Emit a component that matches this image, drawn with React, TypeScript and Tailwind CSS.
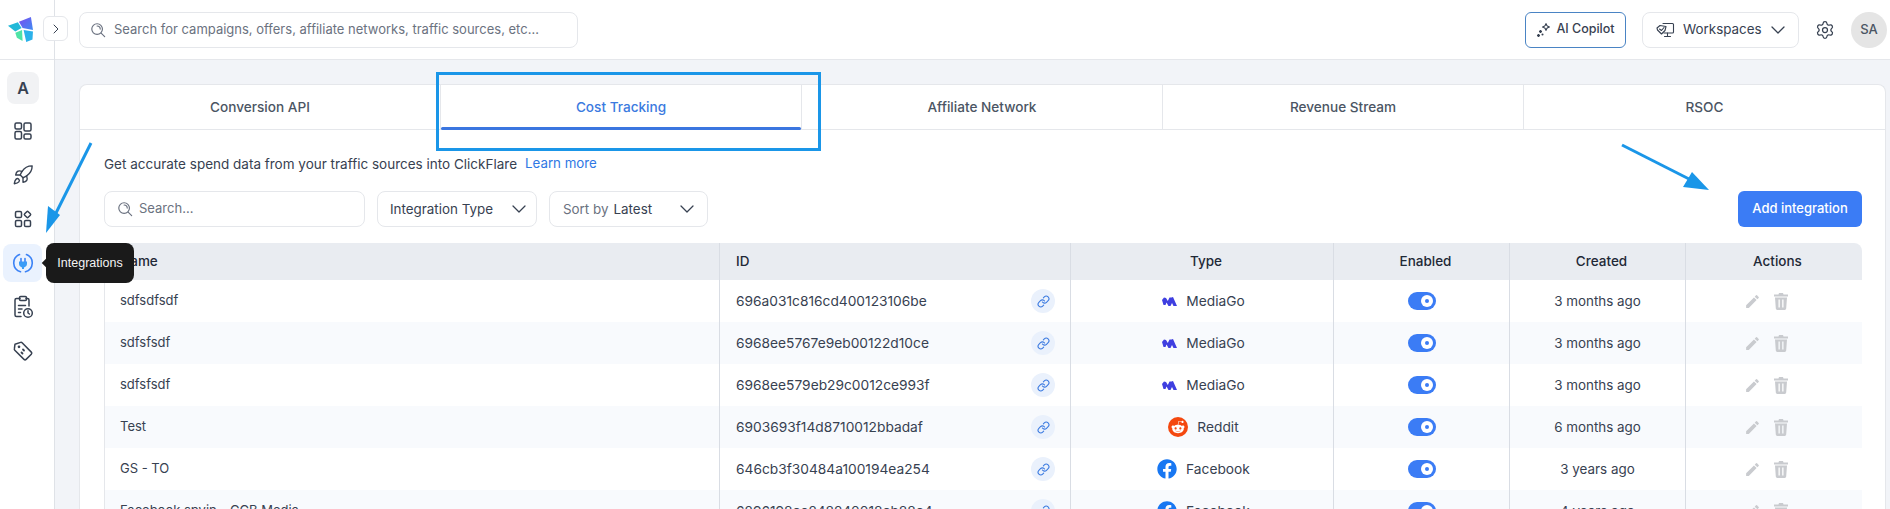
import React from "react";
import { ChevronRight, ChevronDown, Link as LinkIcon, Settings, Rocket } from "lucide-react";
import { FaFacebook, FaRedditAlien } from "react-icons/fa";

const Mag = ({ size = 17 }: { size?: number }) => (
  <svg width={size} height={size} viewBox="0 0 18 18" fill="none" stroke="#6b7280" strokeWidth="1.3" strokeLinecap="round">
    <circle cx="8" cy="8" r="6" />
    <path d="M12.5 12.5 16.5 16.5" />
    <path d="M8 4.5a3.5 3.5 0 0 1 3.5 3.5" />
  </svg>
);

const Logo = () => (
  <svg width="25" height="25" viewBox="0 0 24 24">
    <defs>
      <linearGradient id="lg1" x1="0" y1="0" x2="1" y2="1">
        <stop offset="0" stopColor="#7c4df0" />
        <stop offset="1" stopColor="#3d8bf2" />
      </linearGradient>
    </defs>
    <polygon points="0,8.500 9.500,5 13,10.500 7,14" fill="#22b8d8" />
    <polygon points="10.500,4.500 22,0 24,12.500 14,10.500" fill="url(#lg1)" />
    <polygon points="15,12.500 24,14 23.500,21.500 17.500,24" fill="#2bb1ea" />
    <polygon points="7,15 13.500,12.500 14,23 8.500,20" fill="#4fe3a6" />
  </svg>
);

const Dash = () => (
  <svg width="20" height="20" viewBox="0 0 20 20" fill="none" stroke="#374151" strokeWidth="1.5">
    <rect x="2" y="2" width="6.5" height="6" rx="1.5" />
    <rect x="2" y="10.500" width="6.5" height="7.500" rx="1.5" />
    <rect x="11" y="2" width="7" height="8" rx="1.5" />
    <rect x="11" y="13" width="7" height="5" rx="1.5" />
  </svg>
);

const Apps = () => (
  <svg width="20" height="20" viewBox="0 0 20 20" fill="none" stroke="#374151" strokeWidth="1.5">
    <rect x="2.500" y="2.500" width="6" height="6" rx="1.3" />
    <rect x="2.500" y="11.500" width="6" height="6" rx="1.3" />
    <rect x="11.500" y="11.500" width="6" height="6" rx="1.3" />
    <rect x="12" y="3" width="5" height="5" rx="1" transform="rotate(45 14.500 5.500)" />
  </svg>
);

const Plug = () => (
  <svg width="24" height="24" viewBox="0 0 24 24" fill="none">
    <path d="M15.500 3.600A9 9 0 0 1 14.500 20.700" stroke="#3b82f6" strokeWidth="1.6" strokeLinecap="round" />
    <path d="M8.500 3.600A9 9 0 0 0 9.500 20.700" stroke="#3b82f6" strokeWidth="1.6" strokeLinecap="round" />
    <path d="M8 10.500h8v2a4 4 0 0 1-3 3.900V18h-2v-1.600a4 4 0 0 1-3-3.900z" fill="#3b9cf6" />
    <path d="M10 7.500v3M14 7.500v3" stroke="#3b82f6" strokeWidth="1.6" strokeLinecap="round" />
  </svg>
);

const ClipClock = () => (
  <svg width="22" height="24" viewBox="0 0 22 24" fill="none" stroke="#374151" strokeWidth="1.5" strokeLinecap="round" strokeLinejoin="round">
    <path d="M8 3.500H4.500A1.500 1.500 0 0 0 3 5v15a1.500 1.500 0 0 0 1.500 1.500H9" />
    <path d="M14 3.500h1.500A1.500 1.500 0 0 1 17 5v6" />
    <rect x="7.500" y="1.500" width="7" height="4" rx="1.2" />
    <path d="M6.500 10.500h7M6.500 14h3.500M6.500 17.500h2" />
    <circle cx="16" cy="18" r="4.300" />
    <path d="M16 15.800V18l1.400 1" />
  </svg>
);

const TagIcon = () => (
  <svg width="22" height="22" viewBox="0 0 22 22" fill="none" stroke="#374151" strokeWidth="1.5" strokeLinecap="round" strokeLinejoin="round">
    <path d="M3 4.200 8.600 2.400a1.500 1.500 0 0 1 1.500.4l9.200 9.300a1.500 1.500 0 0 1 0 2.100l-5.200 5.200a1.500 1.500 0 0 1-2.100 0L2.800 10.200a1.500 1.500 0 0 1-.4-1.500z" />
    <circle cx="7" cy="6.800" r="0.6" fill="#374151" />
    <path d="M11 9.500 12 10.500M9.500 12.500 10.500 13.500" strokeWidth="1.8" />
  </svg>
);

const Sparkle = () => (
  <svg width="16" height="16" viewBox="0 0 16 16" fill="none" stroke="#374151" strokeWidth="1.1" strokeLinejoin="round">
    <path d="M10 1.500c.3 2 1.200 3 3.500 3.500-2.300.5-3.200 1.500-3.500 3.500-.3-2-1.200-3-3.500-3.500 2.300-.5 3.200-1.500 3.500-3.500z" />
    <path d="M4.500 8.500l1 1-1 1-1-1z" fill="#374151" />
    <path d="M2.500 12.500l1 1-1 1-1-1z" fill="#374151" />
    <circle cx="6.500" cy="12.500" r="0.500" fill="#374151" />
  </svg>
);

const WorkspacesIcon = () => (
  <svg width="19" height="16" viewBox="0 0 19 16" fill="none" stroke="#374151" strokeWidth="1.1" strokeLinejoin="round" strokeLinecap="round">
    <path d="M7 1.500h9.500a1 1 0 0 1 1 1v7.500a1 1 0 0 1-1 1H8" />
    <path d="M11.500 11v3M8.500 14.500h6" />
    <path d="M1 6l3-2.500 6 1-1 4-3.500 3.500L1.500 8z" fill="#fff" />
    <path d="M3.500 7l2 1.500 2.500-3" />
  </svg>
);

const MediaGo = () => (
  <svg width="15" height="9" viewBox="0 0 15 9">
    <path d="M0 3 2 .5 4 1l1.800 3L7.500.5 9.500.5 11 0l4 9h-3.500L10 6 8.500 9H6.500L4.500 5.500 3.500 8H1.500z" fill="#3f3fe0" />
  </svg>
);

const Pencil = () => (
  <svg width="17" height="17" viewBox="0 0 24 24" fill="#c9cbcf">
    <path d="M3 17.250V21h3.750L17.810 9.940l-3.750-3.750L3 17.250zM20.710 7.040a1 1 0 0 0 0-1.410l-2.340-2.340a1 1 0 0 0-1.410 0l-1.830 1.830 3.750 3.750 1.830-1.830z" />
  </svg>
);

const Trash = () => (
  <svg width="16" height="17" viewBox="0 0 16 17" fill="#c9cbcf">
    <path d="M6 0h4l.5 1.500H15V3.500H1V1.500h4.500z" />
    <path fillRule="evenodd" d="M2 4.500h12l-.8 11a1.500 1.500 0 0 1-1.500 1.400H4.300a1.500 1.500 0 0 1-1.500-1.400zM5.500 6.500v8h1.300v-8zM9.200 6.500v8h1.300v-8z" />
  </svg>
);

const Reddit = () => (
  <span className="flex h-[20px] w-[20px] items-center justify-center rounded-full bg-[#f4480f] text-white">
    <FaRedditAlien size={14} />
  </span>
);

const FB = () => <FaFacebook size={20} color="#1877f2" />;

type RowData = { name: string; id: string; type: "MediaGo" | "Reddit" | "Facebook"; created: string };

const rows: RowData[] = [
  { name: "sdfsdfsdf", id: "696a031c816cd400123106be", type: "MediaGo", created: "3 months ago" },
  { name: "sdfsfsdf", id: "6968ee5767e9eb00122d10ce", type: "MediaGo", created: "3 months ago" },
  { name: "sdfsfsdf", id: "6968ee579eb29c0012ce993f", type: "MediaGo", created: "3 months ago" },
  { name: "Test", id: "6903693f14d8710012bbadaf", type: "Reddit", created: "6 months ago" },
  { name: "GS - TO", id: "646cb3f30484a100194ea254", type: "Facebook", created: "3 years ago" },
  { name: "Facebook spyin - CCB Media", id: "6296198ce248240018cb88c4", type: "Facebook", created: "4 years ago" },
];

const tabs = ["Conversion API", "Cost Tracking", "Affiliate Network", "Revenue Stream", "RSOC"];

const Cell = ({ children, className = "" }: { children: React.ReactNode; className?: string }) => (
  <div className={`flex items-center border-r border-[#d9dde4] last:border-r-0 ${className}`}>{children}</div>
);

const GRID = "grid grid-cols-[615px_351px_263px_176px_176px_175px]";

function Item({ children, active }: { children: React.ReactNode; active?: boolean }) {
  return (
    <div className={`flex h-[38px] w-[39px] items-center justify-center rounded-lg ${active ? "bg-[#eaf2fe]" : ""}`}>
      {children}
    </div>
  );
}

export default function App() {
  return (
    <div className="relative flex h-[509px] w-full overflow-hidden bg-white font-['Inter',sans-serif] text-[13.4px] text-[#374151]">
      <aside className="flex w-[55px] shrink-0 flex-col border-r border-[#dfe2e7] bg-white">
        <div className="flex h-[60px] shrink-0 items-center border-b border-[#e5e7eb] pl-[8px]">
          <Logo />
        </div>
        <div className="flex flex-col items-start gap-[6px] pl-[3px] pt-[12px]">
          <div className="mb-[2px] ml-[4px] flex h-[32px] w-[32px] items-center justify-center rounded-lg bg-[#f1f2f4] text-[16px] font-semibold text-[#374151]">
            A
          </div>
          <Item><Dash /></Item>
          <Item><Rocket size={22} strokeWidth={1.5} color="#374151" /></Item>
          <Item><Apps /></Item>
          <Item active><Plug /></Item>
          <Item><ClipClock /></Item>
          <Item><TagIcon /></Item>
        </div>
      </aside>

      <div className="flex min-w-0 flex-1 flex-col">
        <header className="flex h-[60px] shrink-0 items-center border-b border-[#e5e7eb] bg-white pl-[24px] pr-[3px]">
          <div className="flex h-[36px] w-[499px] items-center gap-[8px] rounded-lg border border-[#e5e7eb] pl-[10px]">
            <Mag size={16} />
            <span className="text-[13px] text-[#6b7280]">Search for campaigns, offers, affiliate networks, traffic sources, etc…</span>
          </div>
          <div className="ml-auto flex items-center">
            <div className="flex h-[36px] w-[101px] items-center justify-center gap-[4px] rounded-md border border-[#4a84c4] text-[12.5px] font-medium text-[#374151]">
              <Sparkle />
              AI Copilot
            </div>
            <div className="ml-[16px] flex h-[36px] w-[157px] items-center gap-[8px] rounded-lg border border-[#e5e7eb] pl-[13px] text-[13.4px] text-[#374151]">
              <WorkspacesIcon />
              <span>Workspaces</span>
              <ChevronDown size={24} strokeWidth={1.25} className="ml-[-4px]" />
            </div>
            <Settings size={20} strokeWidth={1.5} color="#374151" className="ml-[16px]" />
            <div className="ml-[16px] flex h-[36px] w-[36px] items-center justify-center rounded-full bg-[#e5e5e5] text-[13px] font-medium text-[#4b5563]">
              SA
            </div>
          </div>
        </header>

        <main className="min-h-0 flex-1 overflow-hidden bg-[#f2f4f8] pl-[24px] pr-[4px] pt-[24px]">
          <div className="h-full rounded-t-lg border border-b-0 border-[#e5e7eb] bg-white">
            <div className="grid h-[45px] grid-cols-5 border-b border-[#e5e7eb]">
              {tabs.map((t, i) => (
                <div
                  key={t}
                  className={`relative flex items-center justify-center text-[13.6px] font-medium ${i < 4 ? "border-r border-[#e5e7eb]" : ""} ${i === 1 ? "text-[#3b7ae0]" : "text-[#4b5563]"}`}
                >
                  {t}
                  {i === 1 && <span className="absolute bottom-[-1px] left-0 right-0 h-[3px] rounded-sm bg-[#3b76e0]" />}
                </div>
              ))}
            </div>
            <div className="pl-[24px] pr-[23px] pt-[24px]">
              <p className="flex h-[20px] items-center text-[13.5px] text-[#374151]">
                Get accurate spend data from your traffic sources into ClickFlare
                <span className="ml-[8px] text-[13.3px] text-[#2f78e4]">Learn more</span>
              </p>
              <div className="mt-[17px] flex h-[36px] items-stretch">
                <div className="flex w-[261px] items-center gap-[6px] rounded-lg border border-[#e5e7eb] pl-[12px] text-[#6b7280]">
                  <Mag size={16} />
                  <span className="text-[13px]">Search…</span>
                </div>
                <div className="ml-[12px] flex w-[160px] items-center rounded-lg border border-[#e5e7eb] pl-[12px] text-[#374151]">
                  Integration Type
                  <ChevronDown size={24} strokeWidth={1.25} className="ml-[14px]" />
                </div>
                <div className="ml-[12px] flex w-[159px] items-center rounded-lg border border-[#e5e7eb] pl-[13px]">
                  <span className="text-[#6b7280]">Sort by</span>
                  <span className="ml-[5px]">Latest</span>
                  <ChevronDown size={24} strokeWidth={1.25} className="ml-auto mr-[8px]" />
                </div>
                <div className="ml-auto flex w-[124px] items-center justify-center rounded-md bg-[#3b7cf5] text-[13px] font-medium text-white">
                  Add integration
                </div>
              </div>
              <div className="mt-[16px] overflow-hidden rounded-t-lg border-l border-[#e5e7eb]">
                <div className={`${GRID} h-[37px] bg-[#e9ecf1] text-[13.5px] font-medium text-[#1f2937]`}>
                  <Cell className="pl-[15px]">Name</Cell>
                  <Cell className="pl-[16px]">ID</Cell>
                  <Cell className="justify-center pl-[8px]">Type</Cell>
                  <Cell className="justify-center pl-[8px]">Enabled</Cell>
                  <Cell className="justify-center pl-[8px]">Created</Cell>
                  <Cell className="justify-center pl-[8px]">Actions</Cell>
                </div>
                {rows.map((r, i) => (
                  <div key={i} className={`${GRID} h-[42px] ${i % 2 === 1 ? "bg-[#f8fafd]" : "bg-white"}`}>
                    <Cell className="pl-[15px] text-[13px]">{r.name}</Cell>
                    <Cell className="justify-between pl-[16px] pr-[15px]">
                      <span className="text-[13.75px]">{r.id}</span>
                      <span className="flex h-[24px] w-[24px] items-center justify-center rounded-full bg-[#eaf1fc]">
                        <LinkIcon size={13} color="#3b7ae0" strokeWidth={2} />
                      </span>
                    </Cell>
                    <Cell className="justify-center gap-[9px] pl-[3px] text-[13.75px]">
                      {r.type === "MediaGo" && <MediaGo />}
                      {r.type === "Reddit" && <Reddit />}
                      {r.type === "Facebook" && <FB />}
                      {r.type}
                    </Cell>
                    <Cell className="justify-center">
                      <span className="flex h-[18px] w-[28px] items-center justify-end rounded-full bg-[#3b7cf5] pr-[3px]">
                        <span className="flex h-[12px] w-[12px] items-center justify-center rounded-full bg-white">
                          <span className="h-[4px] w-[4px] rounded-full bg-[#3b7cf5]" />
                        </span>
                      </span>
                    </Cell>
                    <Cell className="justify-center">{r.created}</Cell>
                    <Cell className="justify-center gap-[12px] pr-[14px]">
                      <Pencil />
                      <Trash />
                    </Cell>
                  </div>
                ))}
              </div>
            </div>
          </div>
        </main>
      </div>

      {/* collapse button straddling the sidebar edge */}
      <div className="absolute left-[43px] top-[16px] flex h-[25px] w-[25px] items-center justify-center rounded-md border border-[#e5e7eb] bg-white">
        <ChevronRight size={16} strokeWidth={1.5} color="#374151" />
      </div>

      {/* tooltip */}
      <div className="absolute left-[46px] top-[243px] flex h-[40px] w-[88px] items-center justify-center rounded-lg bg-[#1a1a1a] font-['Liberation_Sans',sans-serif] text-[12.5px] text-[#f3f3f3]">
        <span className="absolute left-[-3px] top-[17px] h-[6px] w-[6px] rotate-45 bg-[#1a1a1a]" />
        Integrations
      </div>

      {/* annotations */}
      <div className="pointer-events-none absolute left-[436px] top-[72px] h-[79px] w-[385px] border-[3px] border-[#1a96e8]" />
      <svg className="pointer-events-none absolute left-0 top-0" width="1890" height="509">
        <path d="M91 143 54 217" stroke="#1a96e8" strokeWidth="3" fill="none" />
        <polygon points="46,233 48,206 60,215" fill="#1a96e8" />
        <path d="M1622 145 1693 181" stroke="#1a96e8" strokeWidth="3" fill="none" />
        <polygon points="1709,190 1683,187 1692,172" fill="#1a96e8" />
      </svg>
    </div>
  );
}
